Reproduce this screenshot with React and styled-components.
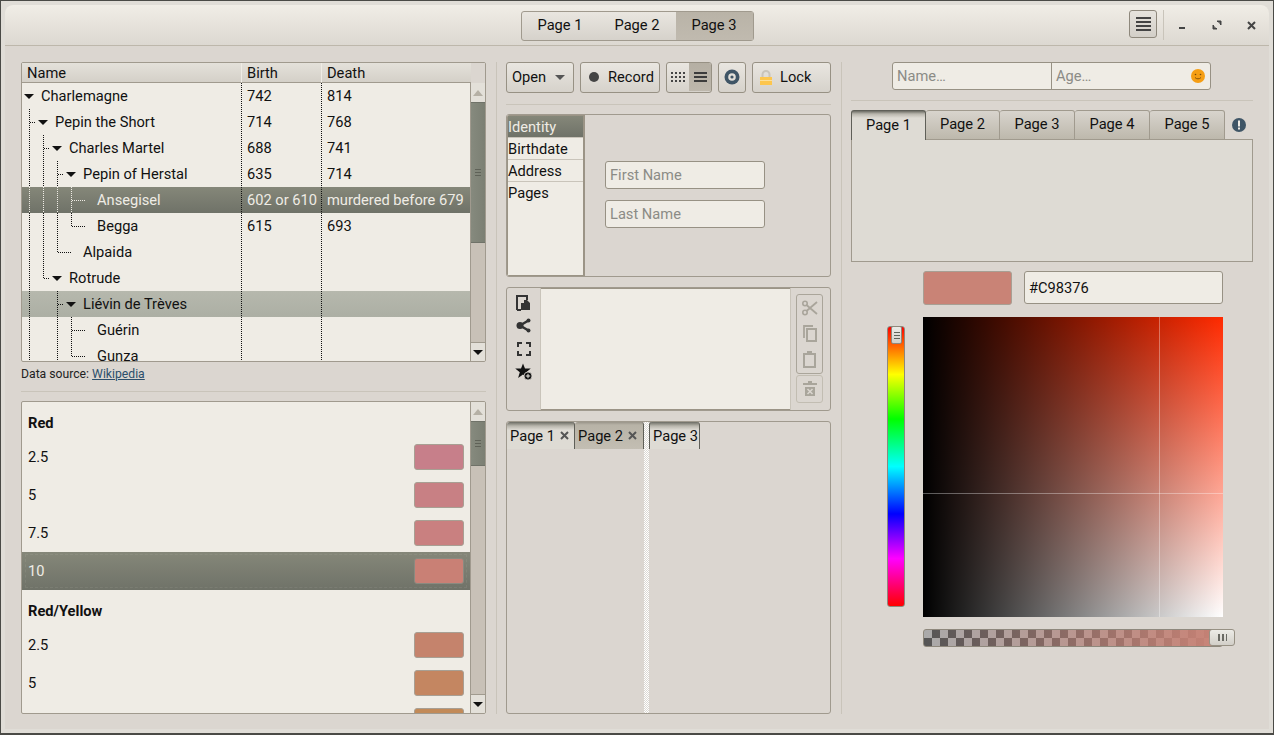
import React from "react";
import styled, { createGlobalStyle } from "styled-components";

const Global = createGlobalStyle`
  html, body { margin: 0; height: 100%; }
  body {
    background: #e0ddd7;
    font-family: Roboto, "Liberation Sans", sans-serif;
    font-size: 14.67px;
    color: #111;
  }
  #root { height: 100%; }
`;

const border = "#a09a8e";
const dots = "linear-gradient(#111 50%, transparent 50%)";
const selectedBg = "linear-gradient(#858779, #6f7268)";

const Frame = styled.div`
  width: 1274px;
  height: 735px;
  box-sizing: border-box;
  border: 1px solid #4a4a46;
  border-bottom-width: 2px;
  padding: 4px;
  overflow: hidden;
`;
const Win = styled.div`
  height: 100%;
  display: flex;
  flex-direction: column;
  width: 1264px;
  background: #dbd6d0;
  border-radius: 8px 8px 0 0;
`;
const TitleBar = styled.div`
  height: 41px;
  flex: none;
  box-sizing: border-box;
  border-bottom: 1px solid #bdb7ab;
  border-radius: 8px 8px 0 0;
  background: linear-gradient(#f0ede6, #dcd8d1);
  display: grid;
  grid-template-columns: 1fr auto 1fr;
  align-items: center;
`;
const Switcher = styled.div`
  display: flex;
  height: 30px;
  box-sizing: border-box;
  border: 1px solid ${border};
  border-radius: 3px;
  background: linear-gradient(#e9e6e0, #d6d2cb);
  margin-top: 1px;
`;
const SwitchItem = styled.div`
  width: 77px;
  box-sizing: border-box;
  padding-bottom: 1px;
  display: flex;
  align-items: center;
  justify-content: center;
  background: ${(p) => (p.$on ? "linear-gradient(#b9b3a7, #c0baaf)" : "transparent")};
`;
const TitleRight = styled.div`
  grid-column: 3;
  display: flex;
  align-items: center;
  justify-content: flex-end;
  height: 100%;
  padding-right: 1px;
`;
const MenuBtn = styled.div`
  width: 28px;
  height: 28px;
  box-sizing: border-box;
  border: 1px solid #8e887c;
  border-radius: 3px;
  background: linear-gradient(#e6e3dd, #d3cfc8);
  display: flex;
  align-items: center;
  justify-content: center;
  margin-top: -2px;
`;
const TitleSep = styled.div`
  width: 1px;
  height: 30px;
  background: #c9c4ba;
  margin: 0 2px 0 6px;
`;
const WinBtn = styled.div`
  width: 34px;
  height: 30px;
  display: flex;
  align-items: center;
  justify-content: center;
`;

const Content = styled.div`
  flex: 1;
  min-height: 0;
  display: grid;
  grid-template-columns: 465px 0 325px 0 402px;
  column-gap: 10px;
  padding: 16px 0 15px 16px;
`;
const VSep = styled.div`
  width: 1px;
  background: #c9c4ba;
`;
const Column = styled.div`
  display: flex;
  flex-direction: column;
  min-height: 0;
`;
const HSep = styled.div`
  height: 1px;
  flex: none;
  background: #c9c4ba;
  margin: ${(p) => p.$m};
`;

/* tree */
const Sunken = styled.div`
  box-sizing: border-box;
  border: 1px solid ${border};
  border-radius: 2px;
  background: #efece5;
  overflow: hidden;
  display: flex;
  flex-direction: column;
`;
const TreeBox = styled(Sunken)`
  height: 300px;
  flex: none;
`;
const HeaderRow = styled.div`
  display: flex;
  height: 20px;
  flex: none;
  background: #dbd6d0;
`;
const HeaderCell = styled.div`
  width: ${(p) => p.$w}px;
  box-sizing: border-box;
  padding-left: 5px;
  line-height: 20px;
  border-bottom: 1px solid ${border};
  border-right: ${(p) => (p.$last ? "0" : "1px solid #efece5")};
  background: linear-gradient(#e4e1da, #d4d0c8);
`;
const Body = styled.div`
  flex: 1;
  display: flex;
  min-height: 0;
`;
const Rows = styled.div`
  flex: 1;
  min-width: 0;
  overflow: hidden;
`;
const TreeRow = styled.div`
  height: 26px;
  display: flex;
  color: ${(p) => (p.$sel ? "#efece5" : "#111")};
  background: ${(p) =>
    p.$sel ? selectedBg : p.$hover ? "linear-gradient(#b6b8ad, #acafa4)" : "transparent"};
`;
const NameCell = styled.div`
  width: 220px;
  flex: none;
  display: flex;
  align-items: center;
  background: ${dots} right top / 1px 2px repeat-y;
`;
const guideColor = (p) => (p.$sel ? "#efece5" : "#111");
const Guide = styled.div`
  width: 14px;
  height: 100%;
  flex: none;
  position: relative;
  &::before {
    content: "";
    position: absolute;
    left: 7px;
    top: 0;
    width: 1px;
    height: ${(p) => (p.$kind === "end" ? "13px" : p.$kind ? "100%" : "0")};
    background: linear-gradient(${guideColor} 50%, transparent 50%) 0 0 / 1px 2px;
  }
  &::after {
    content: "";
    position: absolute;
    left: 8px;
    top: 13px;
    width: 6px;
    height: ${(p) => (p.$kind === "tee" || p.$kind === "end" ? "1px" : "0")};
    background: linear-gradient(90deg, ${guideColor} 50%, transparent 50%) 0 0 / 2px 1px;
  }
`;
const ArrowSlot = styled.div`
  width: 14px;
  flex: none;
  height: 100%;
  display: flex;
  align-items: center;
  justify-content: center;
`;
const Arrow = styled.div`
  width: 0;
  height: 0;
  border: solid transparent;
  border-width: 5px 5px 0;
  border-top-color: ${(p) => p.$c || "#111"};
  margin-left: -1px;
`;
const LeafDash = styled.div`
  width: 8px;
  height: 1px;
  margin: 0 6px 0 0;
  background: linear-gradient(90deg, ${guideColor} 50%, transparent 50%) 0 0 / 2px 1px;
`;
const Name = styled.span`
  margin-left: 5px;
  white-space: nowrap;
`;
const ValueCell = styled.div`
  width: ${(p) => p.$w}px;
  flex: none;
  box-sizing: border-box;
  padding-left: 5px;
  line-height: 26px;
  white-space: nowrap;
  background: ${(p) => (p.$last ? "none" : `${dots} right top / 1px 2px repeat-y`)};
`;
const Scroll = styled.div`
  width: 15px;
  flex: none;
  display: flex;
  flex-direction: column;
  background: #c8c1b7;
  border-left: 1px solid ${border};
  box-sizing: border-box;
`;
const ScrollBtn = styled.div`
  height: 19px;
  flex: none;
  box-sizing: border-box;
  background: #e3e0d9;
  border-top: ${(p) => (p.$bottom ? `1px solid ${border}` : "0")};
  display: flex;
  align-items: center;
  justify-content: center;
`;
const ScrollThumb = styled.div`
  height: ${(p) => p.$h}px;
  flex: none;
  box-sizing: border-box;
  border-top: 1px solid #6f7268;
  border-bottom: 1px solid #6f7268;
  background: linear-gradient(90deg, #868a7e, #7b7f73);
  display: flex;
  align-items: center;
  justify-content: center;
`;
const ScrollGap = styled.div`
  flex: 1;
`;
const Grip = styled.div`
  width: 6px;
  height: 7px;
  background: repeating-linear-gradient(#5f6258 0 1px, transparent 1px 3px);
`;
const Caption = styled.div`
  height: 24px;
  flex: none;
  font-size: 12.2px;
  line-height: 24px;
  color: #222;
`;
const WikiLink = styled.span`
  color: #2c4f6b;
  text-decoration: underline;
`;

/* swatch list */
const ListBox = styled(Sunken)`
  flex: 1;
  min-height: 0;
`;
const ListHead = styled.div`
  height: 36px;
  box-sizing: border-box;
  padding: 6px 0 0 6px;
  font-weight: 700;
  display: flex;
  align-items: center;
`;
const ListRow = styled.div`
  height: 38px;
  box-sizing: border-box;
  padding: 0 6px;
  display: flex;
  align-items: center;
  justify-content: space-between;
  color: ${(p) => (p.$sel ? "#efece5" : "#111")};
  background: ${(p) => (p.$sel ? selectedBg : "transparent")};
  position: relative;
`;
const Focus = styled.div`
  position: absolute;
  inset: 2px 3px;
  border: 1px dashed rgba(239, 236, 229, 0.08);
`;
const Swatch = styled.div`
  width: 50px;
  height: 26px;
  box-sizing: border-box;
  border: 1px solid ${(p) => (p.$sel ? "#8a8a80" : "#a89f93")};
  border-radius: 3px;
  background: ${(p) => p.$c};
`;

/* toolbar */
const Toolbar = styled.div`
  display: flex;
  gap: 6px;
  height: 31px;
  flex: none;
`;
const ToolBtn = styled.div`
  width: ${(p) => p.$w}px;
  height: 31px;
  box-sizing: border-box;
  border: 1px solid #979184;
  border-radius: 3px;
  background: linear-gradient(#e9e6e0, #d6d2cb);
  display: flex;
  align-items: center;
  justify-content: ${(p) => (p.$pl ? "flex-start" : "center")};
  padding: 0 0 1px ${(p) => p.$pl || 0}px;
  gap: ${(p) => p.$g || 0}px;
  flex: none;
`;
const ViewSwitch = styled(ToolBtn)`
  overflow: hidden;
  align-items: stretch;
`;
const ViewItem = styled.div`
  flex: 1;
  display: flex;
  align-items: center;
  justify-content: center;
  background: ${(p) => (p.$on ? "linear-gradient(#b5afa3, #bdb7ac)" : "transparent")};
`;

const FramedPanel = styled.div`
  box-sizing: border-box;
  border: 1px solid ${border};
  border-radius: 3px;
  height: ${(p) => (p.$h ? `${p.$h}px` : "auto")};
  flex: ${(p) => (p.$h ? "none" : 1)};
  margin-top: ${(p) => p.$mt || 0}px;
  display: flex;
  overflow: hidden;
`;
const SideList = styled.div`
  width: 78px;
  flex: none;
  box-sizing: border-box;
  border: 1px solid #9b9486;
  border-right-width: 2px;
  background: #efece5;
`;
const SideItem = styled.div`
  height: 22px;
  box-sizing: border-box;
  line-height: 23px;
  border-bottom: ${(p) => (p.$plain ? "0" : "1px solid #c9c4ba")};
  color: ${(p) => (p.$sel ? "#efece5" : "#111")};
  background: ${(p) => (p.$sel ? selectedBg : "transparent")};
`;
const FormArea = styled.div`
  flex: 1;
  display: flex;
  flex-direction: column;
  justify-content: center;
  gap: 11px;
  padding: 0 0 2px 20px;
`;
const Input = styled.div`
  width: ${(p) => p.$w}px;
  height: ${(p) => p.$h || 28}px;
  box-sizing: border-box;
  border: 1px solid #979184;
  border-radius: 3px;
  background: #efece5;
  color: ${(p) => (p.$value ? "#111" : "#8b8b86")};
  padding-left: 4px;
  display: flex;
  align-items: center;
  flex: none;
`;

const IconRail = styled.div`
  width: 34px;
  flex: none;
  display: flex;
  flex-direction: column;
  padding-top: 3px;
  box-sizing: border-box;
  border-right: 1px solid #c9c4ba;
`;
const RailSlot = styled.div`
  height: 23px;
  flex: none;
  display: flex;
  align-items: center;
  justify-content: center;
`;
const TextArea = styled.div`
  flex: 1;
  background: #efece5;
  border-top: 1px solid #9b9486;
  border-bottom: 1px solid #9b9486;
`;
const ToolSide = styled.div`
  width: 40px;
  flex: none;
  box-sizing: border-box;
  border-left: 1px solid #c9c4ba;
  padding: 6px 7px 0 5px;
  display: flex;
  flex-direction: column;
  gap: 1px;
`;
const ToolGroup = styled.div`
  box-sizing: border-box;
  border: 1px solid ${(p) => (p.$light ? "#c2bdb2" : "#aaa59a")};
  border-radius: 3px;
  height: ${(p) => p.$h}px;
  display: flex;
  flex-direction: column;
  align-items: center;
  justify-content: space-around;
`;

/* closable tabs */
const TabPane = styled.div`
  width: ${(p) => (p.$w ? `${p.$w}px` : "auto")};
  flex: ${(p) => (p.$w ? "none" : 1)};
  display: flex;
  align-items: flex-start;
`;
const CloseTab = styled.div`
  width: ${(p) => p.$w}px;
  height: 27px;
  flex: none;
  white-space: nowrap;
  box-sizing: border-box;
  display: flex;
  align-items: center;
  gap: 5px;
  padding-left: 3px;
  border-right: 1px solid #5f5f58;
  border-left: ${(p) => (p.$left ? "1px solid #5f5f58" : "0")};
  border-radius: 3px 3px 0 0;
  background: ${(p) =>
    p.$on
      ? "linear-gradient(#6c6c64 0, #b9b6ad 4px, #dedbd4 8px, #dedbd4)"
      : "linear-gradient(#9a958a 0, #b8b3a7 3px, #c3beb3)"};
`;
const DropGap = styled.div`
  width: 5px;
  flex: none;
  background: repeating-conic-gradient(#ffffff 0 25%, #dcd9d3 0 50%) 0 0 / 2px 2px;
`;

/* right side */
const InputRow = styled.div`
  display: flex;
  padding-left: 41px;
  height: 28px;
  flex: none;
`;
const SplitInput = styled.div`
  width: 319px;
  display: flex;
  box-sizing: border-box;
  border: 1px solid #979184;
  border-radius: 3px;
  background: #efece5;
  color: #8b8b86;
`;
const SplitPart = styled.div`
  width: ${(p) => p.$w}px;
  flex: none;
  box-sizing: border-box;
  padding: 0 5px 0 4px;
  border-right: ${(p) => (p.$r ? "1px solid #979184" : "0")};
  display: flex;
  align-items: center;
  justify-content: space-between;
`;
const TabStrip = styled.div`
  display: flex;
  height: 30px;
  flex: none;
`;
const PageTab = styled.div`
  width: ${(p) => p.$w}px;
  box-sizing: border-box;
  padding-bottom: 2px;
  display: flex;
  align-items: center;
  justify-content: center;
  border: 1px solid ${(p) => (p.$on ? "#5f5f58" : border)};
  border-left-width: ${(p) => (p.$on ? 1 : 0)}px;
  border-bottom: ${(p) => (p.$on ? "0" : `1px solid ${border}`)};
  border-radius: 3px 3px 0 0;
  background: ${(p) =>
    p.$on
      ? "linear-gradient(#6c6c64 0, #b9b6ad 3px, #dedbd4 7px, #dedbd4)"
      : "linear-gradient(#d8d4cd, #bdb8ac)"};
`;
const StripEnd = styled.div`
  flex: 1;
  display: flex;
  align-items: center;
  justify-content: center;
  box-sizing: border-box;
  border-bottom: 1px solid ${border};
`;
const TabPanel = styled.div`
  height: 122px;
  flex: none;
  box-sizing: border-box;
  border: 1px solid ${border};
  border-top: 0;
  background: #dedbd4;
`;
const ColorRow = styled.div`
  display: flex;
  padding: 9px 0 0 72px;
  gap: 12px;
  flex: none;
`;
const ColorChip = styled.div`
  width: 89px;
  height: 34px;
  box-sizing: border-box;
  border: 1px solid #a89f93;
  border-radius: 3px;
  background: #c98376;
`;
const PickerRow = styled.div`
  display: flex;
  padding: 12px 0 0 36px;
  gap: 18px;
  flex: none;
`;
const HueTrack = styled.div`
  width: 18px;
  height: 281px;
  margin-top: 9px;
  box-sizing: border-box;
  border: 1px solid #8e887c;
  border-radius: 3px;
  position: relative;
  background: linear-gradient(#ff0000, #ffff00 17%, #00ff00 33%, #00ffff 50%, #0000ff 67%, #ff00ff 83%, #ff0000);
`;
const HueThumb = styled.div`
  position: absolute;
  left: 3px;
  top: -1px;
  width: 11px;
  height: 18px;
  box-sizing: border-box;
  border: 1px solid #8e887c;
  border-radius: 2px;
  background: linear-gradient(#ecebe6, #d2cfc8);
  display: flex;
  align-items: center;
  justify-content: center;
`;
const SatSquare = styled.div`
  width: 300px;
  height: 300px;
  position: relative;
  background: linear-gradient(90deg, #000, transparent), linear-gradient(#ff2a00, #fff);
`;
const CrossV = styled.div`
  position: absolute;
  left: 236px;
  top: 0;
  bottom: 0;
  width: 1px;
  background: rgba(255, 255, 255, 0.35);
`;
const CrossH = styled.div`
  position: absolute;
  top: 176px;
  left: 0;
  right: 0;
  height: 1px;
  background: rgba(255, 255, 255, 0.35);
`;
const AlphaRow = styled.div`
  margin: 12px 0 0 72px;
  width: 312px;
  height: 18px;
  position: relative;
  flex: none;
`;
const AlphaTrack = styled.div`
  width: 300px;
  height: 18px;
  box-sizing: border-box;
  border: 1px solid #8e887c;
  border-radius: 3px;
  background: linear-gradient(90deg, rgba(201, 131, 118, 0), #c98376),
    repeating-conic-gradient(#555 0 25%, #aaa 0 50%) 0 0 / 16px 16px;
`;
const AlphaThumb = styled.div`
  position: absolute;
  right: 0;
  top: 0;
  width: 26px;
  height: 17px;
  box-sizing: border-box;
  border: 1px solid #979184;
  border-radius: 3px;
  background: linear-gradient(#ecebe6, #d2cfc8);
  display: flex;
  align-items: center;
  justify-content: center;
`;
const AlphaGrip = styled.div`
  width: 9px;
  height: 7px;
  background: repeating-linear-gradient(90deg, #6a6a64 0 2px, transparent 2px 4px);
`;

const Glyph = ({ s = 16, w, h, children }) => (
  <svg width={w || s} height={h || s} viewBox={`0 0 ${w || s} ${h || s}`} style={{ display: "block", flex: "none" }}>
    {children}
  </svg>
);

const UpArrow = () => (
  <Glyph w={10} h={6}><path d="M5 0l5 6H0z" fill="#b5b0a5" /></Glyph>
);

const treeRows = [
  { g: [], open: true, name: "Charlemagne", b: "742", d: "814" },
  { g: ["tee"], open: true, name: "Pepin the Short", b: "714", d: "768" },
  { g: ["pass", "tee"], open: true, name: "Charles Martel", b: "688", d: "741" },
  { g: ["pass", "pass", "tee"], open: true, name: "Pepin of Herstal", b: "635", d: "714" },
  { g: ["pass", "pass", "pass", "tee"], name: "Ansegisel", b: "602 or 610", d: "murdered before 679", sel: true },
  { g: ["pass", "pass", "pass", "end"], name: "Begga", b: "615", d: "693" },
  { g: ["pass", "pass", "end"], name: "Alpaida" },
  { g: ["pass", "end"], open: true, name: "Rotrude" },
  { g: ["pass", "", "tee"], open: true, name: "Liévin de Trèves", hover: true },
  { g: ["pass", "", "pass", "tee"], name: "Guérin" },
  { g: ["pass", "", "pass", "end"], name: "Gunza" },
];

// the last row only shows the top of its swatch, its label is below the fold
const swatches = [
  { head: "Red" },
  { l: "2.5", c: "#c77f8a" },
  { l: "5", c: "#c88084" },
  { l: "7.5", c: "#c98080" },
  { l: "10", c: "#c98075", sel: true },
  { head: "Red/Yellow" },
  { l: "2.5", c: "#c5836c" },
  { l: "5", c: "#c48661" },
  { l: "", c: "#c28a58" },
];

const IconDots = () => (
  <Glyph s={14}>
    {[1, 5, 9, 13].map((x) => [2, 6, 10].map((y) => (
      <rect key={`${x}-${y}`} x={x - 1} y={y} width="2" height="2" fill="#444" />
    )))}
  </Glyph>
);
const IconLines = ({ w = 13, n = 3, c = "#3c3c3c" }) => (
  <Glyph w={w} h={n * 4}>
    {Array.from({ length: n }).map((_, i) => (
      <rect key={i} x="0" y={i * 4 + 1} width={w} height="2" fill={c} />
    ))}
  </Glyph>
);
const IconTarget = () => (
  <Glyph s={16}>
    <circle cx="8" cy="8" r="7.5" fill="#3f5566" />
    <circle cx="8" cy="8" r="3.8" fill="#e3e0da" />
    <circle cx="8" cy="8" r="1.6" fill="#3f5566" />
  </Glyph>
);
const IconLock = () => (
  <Glyph w={12} h={15}>
    <path d="M2.5 7V4.500a3.500 3.500 0 0 1 7 0V7" fill="none" stroke="#c9c4ba" strokeWidth="2" />
    <rect x="0" y="7" width="12" height="8" fill="#fdc64d" />
    <rect x="0" y="10" width="12" height="1" fill="#fde09a" />
  </Glyph>
);
const IconPaste = () => (
  <Glyph w={15} h={16}>
    <path d="M1 15V1h10v4" fill="none" stroke="#333" strokeWidth="2" />
    <path d="M5 8h3V5h3l3 3v7H5z" fill="#333" />
    <path d="M1 15h4" stroke="#333" strokeWidth="2" />
  </Glyph>
);
const IconShare = () => (
  <Glyph w={15} h={15}>
    <path d="M12.500 2.500L4 7.500l8.500 5" fill="none" stroke="#333" strokeWidth="2.500" />
    <circle cx="4" cy="7.500" r="3.500" fill="#333" />
    <circle cx="12.500" cy="2.500" r="2" fill="#333" />
    <circle cx="12.500" cy="12.500" r="2" fill="#333" />
  </Glyph>
);
const IconFull = () => (
  <Glyph s={14}>
    <path d="M1 5V1h4M9 1h4v4M13 9v4H9M5 13H1V9" fill="none" stroke="#333" strokeWidth="2" />
  </Glyph>
);
const IconStarAdd = () => (
  <Glyph s={18}>
    <path d="M8 0.500l2 5h5.800l-4.600 3.700 1.700 5.700-4.900-3.300-4.900 3.300 1.700-5.700L.200 5.500H6z" fill="#111" />
    <circle cx="13" cy="13" r="4" fill="#111" stroke="#dbd6d0" strokeWidth=".8" />
    <path d="M13 10.800v4.400M10.800 13h4.400" stroke="#efece5" strokeWidth="1" />
  </Glyph>
);
const grey = "#a9a59b";
const IconCut = () => (
  <Glyph s={16}>
    <circle cx="3" cy="3.500" r="2.200" fill="none" stroke={grey} strokeWidth="1.600" />
    <circle cx="3" cy="12.500" r="2.200" fill="none" stroke={grey} strokeWidth="1.600" />
    <path d="M4.500 5L15 14M4.500 11L15 2" stroke={grey} strokeWidth="1.800" fill="none" />
  </Glyph>
);
const IconCopy = () => (
  <Glyph w={14} h={17}>
    <path d="M1 13V1h9" fill="none" stroke={grey} strokeWidth="1.800" />
    <rect x="4" y="4" width="9" height="12" fill="none" stroke={grey} strokeWidth="2" />
  </Glyph>
);
const IconClip = () => (
  <Glyph w={13} h={17}>
    <rect x="1" y="3" width="11" height="13" fill="none" stroke={grey} strokeWidth="2" />
    <rect x="4" y="0" width="5" height="4" fill={grey} />
  </Glyph>
);
const IconTrash = () => (
  <Glyph w={14} h={16}>
    <path d="M0 3h14M5 1h4" stroke={grey} strokeWidth="2" />
    <rect x="2" y="6" width="10" height="9" fill={grey} />
    <path d="M4.500 8l5 5M9.500 8l-5 5" stroke="#dbd6d0" strokeWidth="1.500" />
  </Glyph>
);
const IconClose = ({ s = 9, c = "#444", w = 2 }) => (
  <Glyph s={s}>
    <path d={`M1 1L${s - 1} ${s - 1}M${s - 1} 1L1 ${s - 1}`} stroke={c} strokeWidth={w} />
  </Glyph>
);
const IconSmile = () => (
  <Glyph s={14}>
    <circle cx="7" cy="7" r="7" fill="#f59e14" />
    <circle cx="4.500" cy="5.500" r=".8" fill="#7a4c08" />
    <circle cx="9.500" cy="5.500" r=".8" fill="#7a4c08" />
    <path d="M4 8.500c1.500 1.800 4.500 1.800 6 0" fill="none" stroke="#7a4c08" strokeWidth=".9" />
  </Glyph>
);
const IconAlert = () => (
  <Glyph s={14}>
    <circle cx="7" cy="7" r="7" fill="#3f5566" />
    <rect x="6" y="2.500" width="2" height="6" fill="#efece5" />
    <rect x="6" y="9.500" width="2" height="2" fill="#efece5" />
  </Glyph>
);

const VScroll = ({ thumb }) => (
  <Scroll>
    <ScrollBtn><UpArrow /></ScrollBtn>
    <ScrollThumb $h={thumb}><Grip /></ScrollThumb>
    <ScrollGap />
    <ScrollBtn $bottom><Arrow /></ScrollBtn>
  </Scroll>
);

const Tree = () => (
  <TreeBox>
    <HeaderRow>
      <HeaderCell $w={220}>Name</HeaderCell>
      <HeaderCell $w={80}>Birth</HeaderCell>
      <HeaderCell $w={149} $last>Death</HeaderCell>
    </HeaderRow>
    <Body>
      <Rows>
        {treeRows.map((r) => (
          <TreeRow key={r.name} $sel={r.sel} $hover={r.hover}>
            <NameCell>
              {r.g.map((k, i) => <Guide key={i} $kind={k} $sel={r.sel} />)}
              <ArrowSlot>
                {r.open ? <Arrow /> : <LeafDash $sel={r.sel} />}
              </ArrowSlot>
              <Name>{r.name}</Name>
            </NameCell>
            <ValueCell $w={80}>{r.b}</ValueCell>
            <ValueCell $w={149} $last>{r.d}</ValueCell>
          </TreeRow>
        ))}
      </Rows>
      <VScroll thumb={141} />
    </Body>
  </TreeBox>
);

const SwatchList = () => (
  <ListBox>
    <Body>
      <Rows>
        {swatches.map((s, i) =>
          s.head ? (
            <ListHead key={i}>{s.head}</ListHead>
          ) : (
            <ListRow key={i} $sel={s.sel}>
              {s.sel && <Focus />}
              <span>{s.l}</span>
              <Swatch $c={s.c} $sel={s.sel} />
            </ListRow>
          )
        )}
      </Rows>
      <VScroll thumb={45} />
    </Body>
  </ListBox>
);

export default function App() {
  return (
    <Frame>
      <Global />
      <Win>
        <TitleBar>
          <span />
          <Switcher>
            <SwitchItem>Page 1</SwitchItem>
            <SwitchItem>Page 2</SwitchItem>
            <SwitchItem $on>Page 3</SwitchItem>
          </Switcher>
          <TitleRight>
            <MenuBtn><IconLines w={15} n={4} c="#444" /></MenuBtn>
            <TitleSep />
            <WinBtn><Glyph s={10}><rect x="1" y="7" width="6" height="2" fill="#444" /></Glyph></WinBtn>
            <WinBtn><Glyph s={10}><path d="M5 1h4v4l-1-1v-2H6zM5 9H1V5l1 1v2h2z" fill="#444" stroke="#444" /></Glyph></WinBtn>
            <WinBtn><IconClose /></WinBtn>
          </TitleRight>
        </TitleBar>
        <Content>
          <Column>
            <Tree />
            <Caption>Data source: <WikiLink>Wikipedia</WikiLink></Caption>
            <HSep $m="5px 0 9px" />
            <SwatchList />
          </Column>
          <VSep />
          <Column>
            <Toolbar>
              <ToolBtn $w={68} $pl={5} $g={10}>Open <Arrow $c="#555" /></ToolBtn>
              <ToolBtn $w={80} $pl={8} $g={9}>
                <Glyph s={10}><circle cx="5" cy="5" r="5" fill="#444" /></Glyph>Record
              </ToolBtn>
              <ViewSwitch $w={46}>
                <ViewItem><IconDots /></ViewItem>
                <ViewItem $on><IconLines /></ViewItem>
              </ViewSwitch>
              <ToolBtn $w={28}><IconTarget /></ToolBtn>
              <ToolBtn $w={79} $pl={7} $g={8}><IconLock />Lock</ToolBtn>
            </Toolbar>
            <HSep $m="11px 0 9px" />
            <FramedPanel $h={163}>
              <SideList>
                <SideItem $sel>Identity</SideItem>
                <SideItem>Birthdate</SideItem>
                <SideItem>Address</SideItem>
                <SideItem $plain>Pages</SideItem>
              </SideList>
              <FormArea>
                <Input $w={160}>First Name</Input>
                <Input $w={160}>Last Name</Input>
              </FormArea>
            </FramedPanel>
            <FramedPanel $h={124} $mt={10}>
              <IconRail>
                <RailSlot><IconPaste /></RailSlot>
                <RailSlot><IconShare /></RailSlot>
                <RailSlot><IconFull /></RailSlot>
                <RailSlot><IconStarAdd /></RailSlot>
              </IconRail>
              <TextArea />
              <ToolSide>
                <ToolGroup $h={80}><IconCut /><IconCopy /><IconClip /></ToolGroup>
                <ToolGroup $h={28} $light><IconTrash /></ToolGroup>
              </ToolSide>
            </FramedPanel>
            <FramedPanel $mt={10}>
              <TabPane $w={137}>
                <CloseTab $w={68} $on>Page 1 <IconClose c="#555" /></CloseTab>
                <CloseTab $w={69}>Page 2 <IconClose c="#555" /></CloseTab>
              </TabPane>
              <DropGap />
              <TabPane>
                <CloseTab $w={51} $on $left>Page 3</CloseTab>
              </TabPane>
            </FramedPanel>
          </Column>
          <VSep />
          <Column>
            <InputRow>
              <SplitInput>
                <SplitPart $w={159} $r>Name…</SplitPart>
                <SplitPart $w={158}>Age…<IconSmile /></SplitPart>
              </SplitInput>
            </InputRow>
            <HSep $m="10px 0 9px" />
            <TabStrip>
              <PageTab $w={75} $on>Page 1</PageTab>
              <PageTab $w={74}>Page 2</PageTab>
              <PageTab $w={75}>Page 3</PageTab>
              <PageTab $w={75}>Page 4</PageTab>
              <PageTab $w={75}>Page 5</PageTab>
              <StripEnd><IconAlert /></StripEnd>
            </TabStrip>
            <TabPanel />
            <ColorRow>
              <ColorChip />
              <Input $w={199} $h={33} $value>#C98376</Input>
            </ColorRow>
            <PickerRow>
              <HueTrack>
                <HueThumb><Grip /></HueThumb>
              </HueTrack>
              <SatSquare>
                <CrossV />
                <CrossH />
              </SatSquare>
            </PickerRow>
            <AlphaRow>
              <AlphaTrack />
              <AlphaThumb><AlphaGrip /></AlphaThumb>
            </AlphaRow>
          </Column>
        </Content>
      </Win>
    </Frame>
  );
}
